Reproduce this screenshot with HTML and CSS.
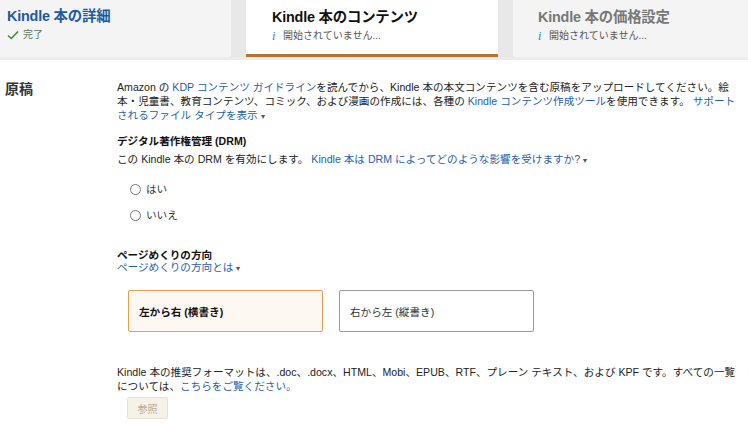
FILE: index.html
```html
<!DOCTYPE html>
<html lang="ja">
<head>
<meta charset="utf-8">
<link rel="stylesheet" href="styles.css">
</head>
<body>
<div class="tabs">
  <div class="tab tab-done">
    <div class="tab-title">Kindle 本の詳細</div>
    <div class="tab-status"><svg class="check" viewBox="0 0 12 10" width="12" height="10"><path d="M1 5.5 L4.3 8.5 L11 1.5" fill="none" stroke="#3d8c40" stroke-width="1.6"/></svg>完了</div>
  </div>
  <div class="tab tab-active">
    <div class="tab-title">Kindle 本のコンテンツ</div>
    <div class="tab-status"><span class="info">i</span>開始されていません...</div>
  </div>
  <div class="tab tab-todo">
    <div class="tab-title">Kindle 本の価格設定</div>
    <div class="tab-status"><span class="info">i</span>開始されていません...</div>
  </div>
</div>

<div class="section">
  <div class="section-label">原稿</div>
  <div class="section-body">
    <p class="intro">Amazon の <a>KDP コンテンツ ガイドライン</a>を読んでから、Kindle 本の本文コンテンツを含む原稿をアップロードしてください。絵本・児童書、教育コンテンツ、コミック、および漫画の作成には、各種の <a>Kindle コンテンツ作成ツール</a>を使用できます。 <a>サポートされるファイル タイプを表示 <span class="caret">▾</span></a></p>

    <div class="block drm">
      <div class="block-title">デジタル著作権管理 (DRM)</div>
      <div class="line">この Kindle 本の DRM を有効にします。 <a>Kindle 本は DRM によってどのような影響を受けますか? <span class="caret">▾</span></a></div>
      <div class="radios">
        <label class="radio"><span class="circle"></span>はい</label>
        <label class="radio"><span class="circle"></span>いいえ</label>
      </div>
    </div>

    <div class="block dir">
      <div class="block-title">ページめくりの方向</div>
      <div class="line"><a>ページめくりの方向とは <span class="caret">▾</span></a></div>
      <div class="options">
        <div class="option selected">左から右 (横書き)</div>
        <div class="option">右から左 (縦書き)</div>
      </div>
    </div>

    <p class="formats">Kindle 本の推奨フォーマットは、.doc、.docx、HTML、Mobi、EPUB、RTF、プレーン テキスト、および KPF です。すべての一覧については、<a>こちらをご覧ください。</a></p>
    <div class="btn-disabled">参照</div>
  </div>
</div>
</body>
</html>
```

FILE: styles.css
```css
* { box-sizing: border-box; }
html, body { margin: 0; padding: 0; background: #fff; }
body {
  font-family: "Liberation Sans", Arial, "Noto Sans CJK JP", sans-serif;
  font-size: 10.6px;
  color: #111;
  width: 748px;
  height: 424px;
  overflow: hidden;
}
a { color: #1f5ea8; }
.caret { font-size: 8px; color: #555; }

.tabs {
  display: flex;
  gap: 15px;
  background: #e8e8e8;
  height: 60px;
  border-bottom: 3px solid #ececec;
}
.tab {
  background: #f4f4f4;
  padding: 6px 0 0 7px;
  height: 57px;
}
.tab-done { width: 231px; }
.tab-active {
  width: 252px;
  background: #fff;
  border-bottom: 3px solid #c0702e;
  padding-left: 26px;
  padding-top: 7px;
}
.tab-todo { flex: 1; padding-left: 25px; padding-top: 7px; }
.tab-title {
  font-size: 14.4px;
  font-weight: bold;
  line-height: 20px;
  letter-spacing: -0.2px;
}
.tab-done .tab-title { color: #1f5aa0; }
.tab-active .tab-title { color: #111; }
.tab-todo .tab-title { color: #777; }
.tab-status {
  margin-top: 2px;
  font-size: 10px;
  color: #555;
  display: flex;
  align-items: center;
  gap: 5px;
  line-height: 14px;
}
.tab-done .tab-status { color: #5a7a5a; gap: 4px; }
.info {
  font-family: "Liberation Serif", serif;
  font-style: italic;
  color: #3a77b8;
  font-size: 12px;
  width: 6px;
}

.section {
  display: flex;
  padding-top: 18px;
}
.section-label {
  width: 117px;
  padding-left: 5px;
  font-size: 14px;
  font-weight: bold;
  color: #333;
  line-height: 18px;
  margin-top: 2px;
}
.section-body {
  flex: 1;
  padding-right: 4px;
}
.intro {
  margin: 2px 0 0;
  line-height: 14px;
  color: #222;
}
.block-title {
  font-weight: bold;
  color: #111;
  line-height: 14px;
}
.drm { margin-top: 10px; }
.line { margin-top: 4px; line-height: 14px; color: #222; }
.radios {
  display: flex;
  flex-direction: column;
  gap: 12px;
  margin-top: 14px;
  padding-left: 13px;
}
.radio {
  display: flex;
  align-items: center;
  gap: 5px;
  color: #333;
  line-height: 14px;
}
.circle {
  width: 11px;
  height: 11px;
  border: 1px solid #777;
  border-radius: 50%;
  background: #fff;
}
.dir { margin-top: 26px; }
.dir .line { margin-top: -2px; }
.options {
  display: flex;
  gap: 16px;
  margin-top: 14px;
  padding-left: 11px;
}
.option {
  width: 195px;
  height: 42px;
  border: 1px solid #999;
  border-radius: 2px;
  display: flex;
  align-items: center;
  padding-left: 10px;
  color: #333;
  background: #fff;
}
.option.selected {
  background: #fdf8f1;
  border-color: #e2a24d;
  font-weight: bold;
  color: #111;
}
.formats {
  margin: 33px 0 0;
  line-height: 14px;
  color: #222;
}
.btn-disabled {
  margin: 4px 0 0 10px;
  width: 41px;
  height: 22px;
  border: 1px solid #e8e2d4;
  border-radius: 2px;
  background: #f6f2e8;
  color: #b5ab97;
  display: flex;
  align-items: center;
  justify-content: center;
  font-size: 10px;
}
```
